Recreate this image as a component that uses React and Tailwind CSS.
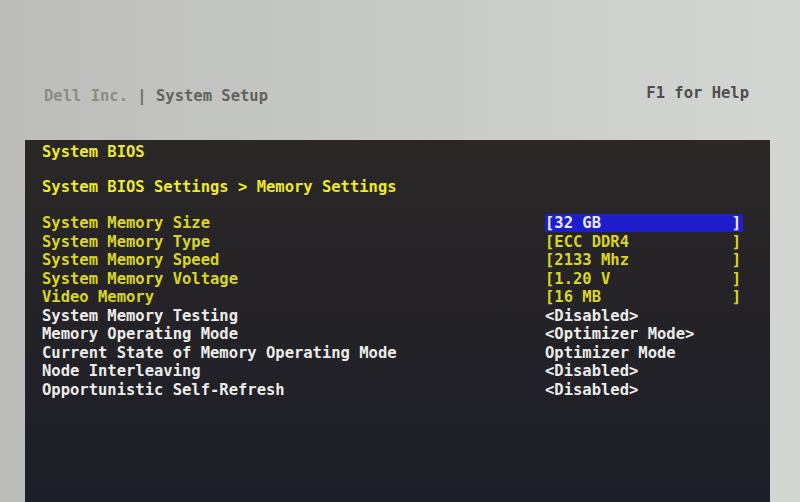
import React from 'react';

const rows = [
    { label: 'System Memory Size', value: '32 GB', kind: 'field', selected: true },
    { label: 'System Memory Type', value: 'ECC DDR4', kind: 'field' },
    { label: 'System Memory Speed', value: '2133 Mhz', kind: 'field' },
    { label: 'System Memory Voltage', value: '1.20 V', kind: 'field' },
    { label: 'Video Memory', value: '16 MB', kind: 'field' },
    { label: 'System Memory Testing', value: '<Disabled>', kind: 'option' },
    { label: 'Memory Operating Mode', value: '<Optimizer Mode>', kind: 'option' },
    { label: 'Current State of Memory Operating Mode', value: 'Optimizer Mode', kind: 'option' },
    { label: 'Node Interleaving', value: '<Disabled>', kind: 'option' },
    { label: 'Opportunistic Self-Refresh', value: '<Disabled>', kind: 'option' },
];

const FieldValue = ({ value, selected }) => (
    <div
        className={
            'flex h-[18px] w-[198px] items-center justify-between pr-[2px] ' +
            (selected ? 'bg-[#1f1dcc] text-[#ececf4]' : 'text-[#d9d622]')
        }
    >
        <span>[{value}</span>
        <span>]</span>
    </div>
);

const App = () => {
    return (
        <div
            className="flex h-[502px] w-[800px] flex-col overflow-hidden bg-gradient-to-r from-[#bcbdba] via-[#c8cac7] to-[#d4d6d4] font-['DejaVu_Sans_Mono','Liberation_Mono',monospace] text-[15.5px] font-bold"
        >
            {/* top strip */}
            <div className="flex h-[140px] items-start justify-between pl-[44px] pr-[51px]">
                <div className="mt-[87px] leading-[18px]">
                    <span className="text-[#8f8b7f]">Dell Inc. </span>
                    <span className="text-[#6c6a64]">| </span>
                    <span className="text-[#63625d]">System Setup</span>
                </div>
                <div className="mt-[84px] leading-[18px] text-[#4e4e4b]">F1 for Help</div>
            </div>

            {/* setup panel */}
            <div className="ml-[25px] h-[362px] w-[745px] bg-gradient-to-b from-[#2b2727] to-[#1d1e27] pl-[17px]">
                <div className="pt-[3px] leading-[18px] text-[#ecea2c]">System BIOS</div>
                <div className="mt-[17px] leading-[18px] text-[#ecea2c]">
                    System BIOS Settings &gt; Memory Settings
                </div>

                <div className="mt-[18px]">
                    {rows.map((row) => (
                        <div key={row.label} className="grid h-[18.5px] grid-cols-[503px_1fr] items-center leading-[18px]">
                            <div className={row.kind === 'field' ? 'text-[#d9d622]' : 'text-[#ececea]'}>
                                {row.label}
                            </div>
                            {row.kind === 'field' ? (
                                <FieldValue value={row.value} selected={row.selected} />
                            ) : (
                                <div className="text-[#ececea]">{row.value}</div>
                            )}
                        </div>
                    ))}
                </div>
            </div>
        </div>
    );
};

export default App;
